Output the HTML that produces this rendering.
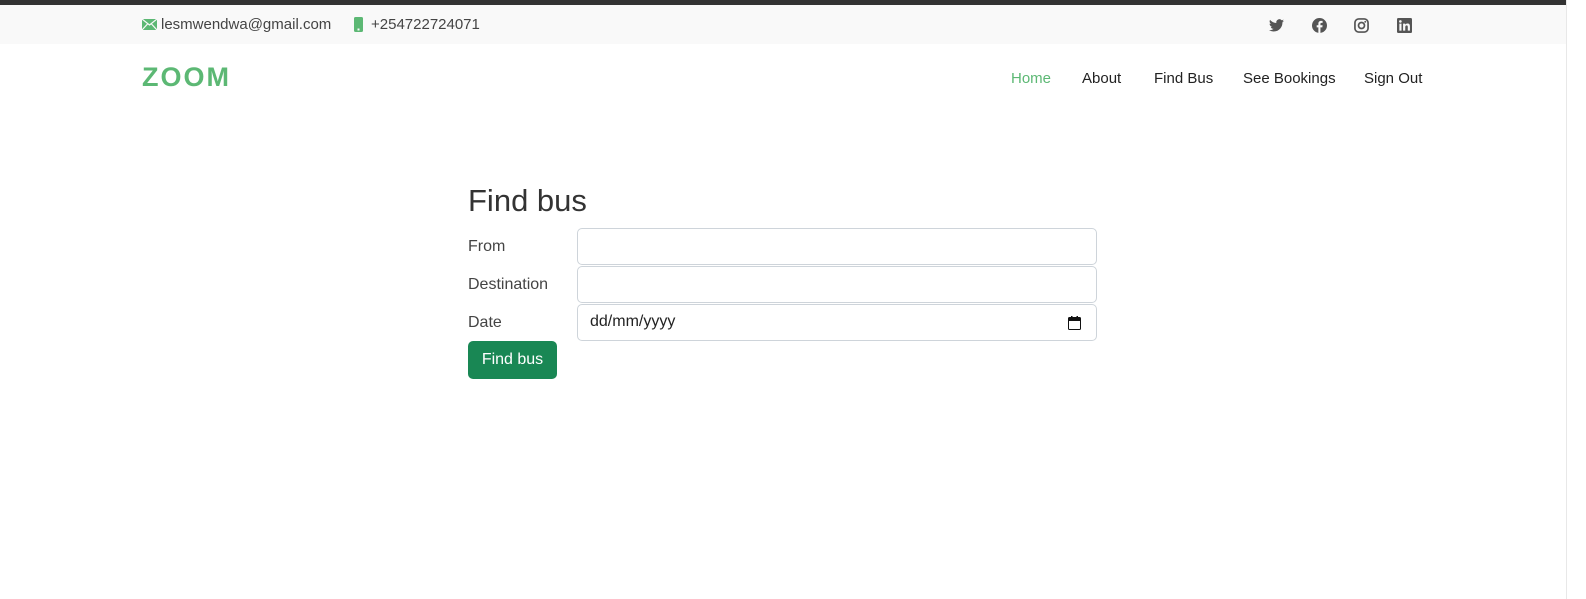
<!DOCTYPE html>
<html><head><meta charset="utf-8"><style>
*{box-sizing:border-box;margin:0;padding:0}
body{width:1586px;height:599px;background:#fff;font-family:"Liberation Sans",sans-serif;color:#444;position:relative;overflow:hidden}
.dark{position:absolute;top:0;left:0;width:1586px;height:5px;background:#333}
.top{position:absolute;top:5px;left:0;width:1566px;height:39px;background:#f9f9f9;font-size:15px;color:#444}
.top .t{position:absolute;top:11px}
.sb{position:absolute;top:0;right:0;width:20px;height:599px;background:#fff;border-left:1px solid #e8e8e8}
.logo{position:absolute;left:142px;top:62px;font-size:27px;font-weight:bold;color:#5cb874;letter-spacing:2px}
.nav{position:absolute;top:70px;font-size:15px;color:#222}
h1{position:absolute;left:468px;top:183px;font-size:31px;font-weight:normal;color:#333}
.lbl{position:absolute;left:468px;font-size:16px;color:#444}
.inp{position:absolute;left:577px;width:520px;height:37px;border:1px solid #ced4da;border-radius:5px;background:#fff}
.btn{position:absolute;left:468px;top:341px;width:89px;height:38px;background:#198754;border-radius:5px;color:#fff;font-size:16px;text-align:center;line-height:38px}
</style></head><body>
<div class="dark"></div>
<div class="top">
<svg style="position:absolute;left:142px;top:14px" width="15" height="11" viewBox="0 0 15 11"><rect width="15" height="11" fill="#5cb874"/><path d="M0 0L7.5 6L15 0M0 11L5.5 5M15 11L9.5 5" stroke="#f9f9f9" stroke-width="1.2" fill="none"/></svg>
<span class="t" style="left:161px">lesmwendwa@gmail.com</span>
<svg style="position:absolute;left:354px;top:12px" width="9" height="15" viewBox="0 0 9 15"><rect width="9" height="15" rx="1.5" fill="#5cb874"/><rect x="3.5" y="11.5" width="2" height="2" fill="#f9f9f9"/></svg>
<span class="t" style="left:371px">+254722724071</span>
<svg style="position:absolute;left:1269px;top:14px" width="15" height="13" viewBox="0 0 24 20"><path d="M24 2.4a10 10 0 0 1-2.8.8A5 5 0 0 0 23.3.4a10 10 0 0 1-3.1 1.2A4.9 4.9 0 0 0 11.8 6 14 14 0 0 1 1.7.9a4.9 4.9 0 0 0 1.5 6.6A4.9 4.9 0 0 1 1 6.9a4.9 4.9 0 0 0 3.9 4.9 5 5 0 0 1-2.2.1 4.9 4.9 0 0 0 4.6 3.4A9.9 9.9 0 0 1 0 17.3 14 14 0 0 0 7.5 19.5c9.1 0 14-7.5 14-14v-.6A10 10 0 0 0 24 2.4z" fill="#555"/></svg>
<svg style="position:absolute;left:1312px;top:13px" width="15" height="15" viewBox="0 0 16 16"><circle cx="8" cy="8" r="8" fill="#555"/><path d="M9 16V10h2l.3-2.3H9V6.3c0-.7.2-1.1 1.1-1.1h1.2V3.1A16 16 0 0 0 9.6 3C8 3 6.8 4 6.8 5.9v1.8H5V10h1.8v6z" fill="#f9f9f9"/></svg>
<svg style="position:absolute;left:1354px;top:13px" width="15" height="15" viewBox="0 0 16 16"><rect x="1" y="1" width="14" height="14" rx="4" fill="none" stroke="#555" stroke-width="1.8"/><circle cx="8" cy="8" r="3.2" fill="none" stroke="#555" stroke-width="1.8"/><circle cx="12" cy="4" r="1" fill="#555"/></svg>
<svg style="position:absolute;left:1397px;top:13px" width="15" height="15" viewBox="0 0 16 16"><rect width="16" height="16" rx="1.5" fill="#555"/><rect x="2.5" y="6" width="2.3" height="7.5" fill="#f9f9f9"/><circle cx="3.6" cy="3.6" r="1.4" fill="#f9f9f9"/><path d="M6.5 6h2.2v1.1c.4-.7 1.2-1.3 2.5-1.3 2.2 0 2.6 1.4 2.6 3.3v4.4h-2.3V9.7c0-.9-.1-1.9-1.2-1.9s-1.5.8-1.5 1.9v3.8H6.5z" fill="#f9f9f9"/></svg>
</div>
<div class="sb"></div>
<div class="logo">ZOOM</div>
<span class="nav" style="left:1011px;color:#5cb874">Home</span>
<span class="nav" style="left:1082px">About</span>
<span class="nav" style="left:1154px">Find Bus</span>
<span class="nav" style="left:1243px">See Bookings</span>
<span class="nav" style="left:1364px">Sign Out</span>
<h1>Find bus</h1>
<span class="lbl" style="top:238px">From</span>
<div class="inp" style="top:228px"></div>
<span class="lbl" style="top:276px">Destination</span>
<div class="inp" style="top:266px"></div>
<span class="lbl" style="top:314px">Date</span>
<div class="inp" style="top:304px"><span style="position:absolute;left:12px;top:8px;font-size:16px;color:#222">dd/mm/yyyy</span>
<svg style="position:absolute;right:15px;top:11px" width="13" height="14" viewBox="0 0 13 14"><rect x="0.5" y="1.5" width="12" height="12" rx="1" fill="none" stroke="#111"/><rect x="0.5" y="1.5" width="12" height="3.5" fill="#111"/><rect x="3" y="0" width="1.5" height="3" fill="#111"/><rect x="8.5" y="0" width="1.5" height="3" fill="#111"/></svg></div>
<div class="btn">Find bus</div>
</body></html>
